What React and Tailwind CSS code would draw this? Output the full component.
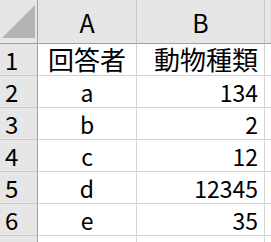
export default function App() {
  const rows = [
    ["1", "回答者", "動物種類", true],
    ["2", "a", "134"],
    ["3", "b", "2"],
    ["4", "c", "12"],
    ["5", "d", "12345"],
    ["6", "e", "35"],
    ["", "", ""],
  ];
  const font = { fontFamily: '"Noto Sans CJK JP", sans-serif' };
  return (
    <div className="w-[271px] h-[242px] overflow-hidden bg-white text-black" style={font}>
      <div className="grid grid-cols-[38px_99px_128px_6px] h-[44px]">
        <div className="relative bg-[#e6e6e6] border-r border-b border-[#a0a0a0]">
          <svg className="absolute left-0 top-0" width="38" height="44">
            <polygon points="2,38 35,5 35,38" fill="#b4b4b4" />
          </svg>
        </div>
        <div className="bg-[#e6e6e6] border-r border-b border-r-[#c8c8c8] border-b-[#a0a0a0] flex items-end justify-center pb-[8px] text-[25px] leading-none">A</div>
        <div className="bg-[#e6e6e6] border-r border-b border-r-[#c8c8c8] border-b-[#a0a0a0] flex items-end justify-center pb-[8px] text-[25px] leading-none">B</div>
        <div className="bg-[#e6e6e6] border-b border-[#a0a0a0]"></div>
      </div>
      {rows.map(([n, a, b, head], i) => (
        <div key={i} className="grid grid-cols-[38px_99px_128px_6px] h-[32px]">
          <div className="bg-[#e6e6e6] border-r border-b border-r-[#a0a0a0] border-b-[#c8c8c8] flex items-end pl-[5px] pb-[3px] text-[24px] leading-none">{n}</div>
          <div className={`border-r border-b border-[#d4d4d4] flex items-end justify-center pb-[3px] leading-none ${head ? "text-[26px]" : "text-[23px]"}`}>{a}</div>
          <div className={`border-r border-b border-[#d4d4d4] flex items-end justify-end pr-[6px] pb-[3px] leading-none ${head ? "text-[26px]" : "text-[23px]"}`}>{b}</div>
          <div className="border-b border-[#d4d4d4]"></div>
        </div>
      ))}
    </div>
  );
}
